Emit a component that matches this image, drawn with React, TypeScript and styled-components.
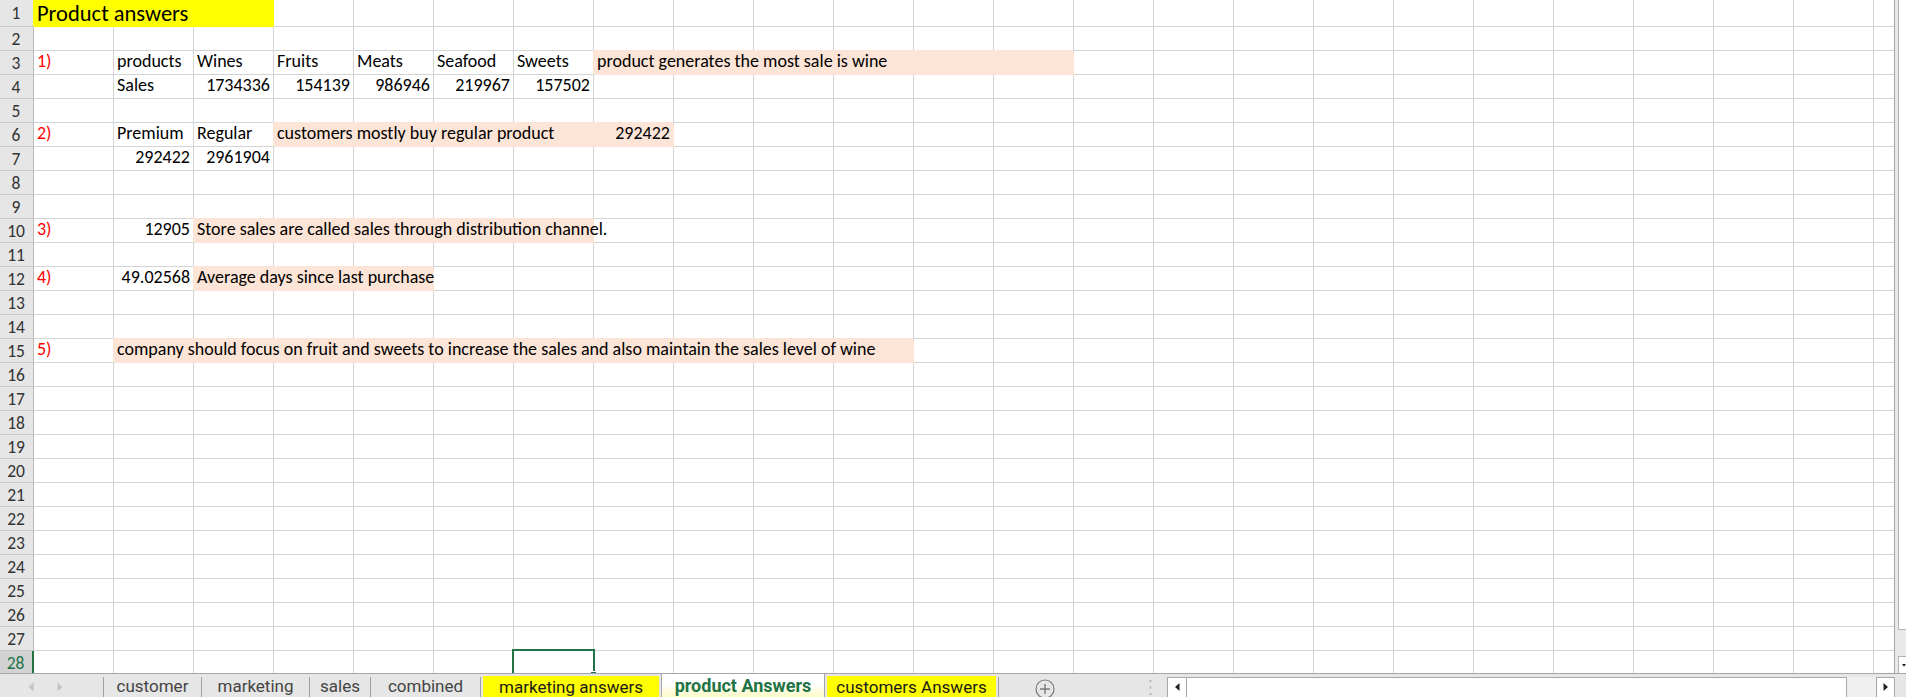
import styled, { createGlobalStyle } from "styled-components";

const GRID = "#d4d4d4";
const EDGE = "#a6a6a6";
const PEACH = "#fce4d6";
const YELLOW = "#ffff00";
const GREEN = "#217346";
const COL_W = 80;
const COLS = 24;
const ROWS = 28;
const SELECTED = { row: 28, col: 6 };

type Spec = {
  col: number;
  span?: number;
  text: string;
  right?: boolean;
  fill?: string;
  red?: boolean;
  big?: boolean;
};

const sheet: Record<number, Spec[]> = {
  1: [{ col: 0, span: 3, text: "Product answers", fill: YELLOW, big: true }],
  3: [
    { col: 0, text: "1)", red: true },
    { col: 1, text: "products" },
    { col: 2, text: "Wines" },
    { col: 3, text: "Fruits" },
    { col: 4, text: "Meats" },
    { col: 5, text: "Seafood" },
    { col: 6, text: "Sweets" },
    { col: 7, span: 6, text: "product generates the most sale is wine", fill: PEACH },
  ],
  4: [
    { col: 1, text: "Sales" },
    { col: 2, text: "1734336", right: true },
    { col: 3, text: "154139", right: true },
    { col: 4, text: "986946", right: true },
    { col: 5, text: "219967", right: true },
    { col: 6, text: "157502", right: true },
  ],
  6: [
    { col: 0, text: "2)", red: true },
    { col: 1, text: "Premium" },
    { col: 2, text: "Regular" },
    { col: 3, span: 4, text: "customers mostly buy regular product", fill: PEACH },
    { col: 7, text: "292422", right: true, fill: PEACH },
  ],
  7: [
    { col: 1, text: "292422", right: true },
    { col: 2, text: "2961904", right: true },
  ],
  10: [
    { col: 0, text: "3)", red: true },
    { col: 1, text: "12905", right: true },
    { col: 2, span: 5, text: "Store sales are called sales through distribution channel.", fill: PEACH },
  ],
  12: [
    { col: 0, text: "4)", red: true },
    { col: 1, text: "49.02568", right: true },
    { col: 2, span: 3, text: "Average days since last purchase", fill: PEACH },
  ],
  15: [
    { col: 0, text: "5)", red: true },
    {
      col: 1,
      span: 10,
      text: "company should focus on fruit and sweets to increase the sales and also maintain the sales level of wine",
      fill: PEACH,
    },
  ],
};

const tabs = [
  { name: "customer", width: 97 },
  { name: "marketing", width: 107 },
  { name: "sales", width: 60 },
  { name: "combined", width: 109 },
];

const App = () => {
  const renderCells = (row: number) => {
    const specs = sheet[row] ?? [];
    const out = [];
    let col = 0;
    while (col < COLS) {
      const spec = specs.find((s) => s.col === col);
      if (spec) {
        const span = spec.span ?? 1;
        out.push(
          <Cell
            key={col}
            $span={span}
            $fill={spec.fill}
            $right={spec.right}
            $red={spec.red}
            $big={spec.big}
          >
            {spec.text}
          </Cell>
        );
        col += span;
      } else {
        const selected = row === SELECTED.row && col === SELECTED.col;
        out.push(
          <Cell key={col} $span={1} $selected={selected}>
            {selected && (
              <SelectBox>
                <FillHandle />
              </SelectBox>
            )}
          </Cell>
        );
        col += 1;
      }
    }
    return out;
  };

  return (
    <Window>
      <GlobalStyle />
      <Main>
        <Grid>
          {Array.from({ length: ROWS }, (_, i) => i + 1).map((r) => (
            <Row key={r} $tall={r === 1}>
              <RowHead $active={r === SELECTED.row}>{r}</RowHead>
              {renderCells(r)}
            </Row>
          ))}
        </Grid>
        <VScroll>
          <VThumb />
          <VTrack />
          <VButton>
            <svg width="7" height="5" viewBox="0 0 7 5">
              <path d="M0 0h7L3.5 4.5z" fill="#222" />
            </svg>
          </VButton>
        </VScroll>
      </Main>

      <TabBar>
        <NavArrows>
          <svg width="6" height="10" viewBox="0 0 6 10">
            <path d="M5.5 0.5v9L0.5 5z" fill="#c4c4c4" />
          </svg>
          <svg width="6" height="10" viewBox="0 0 6 10">
            <path d="M0.5 0.5v9L5.5 5z" fill="#c4c4c4" />
          </svg>
        </NavArrows>
        <Sep />
        {tabs.map((t) => (
          <Frag key={t.name}>
            <SheetTab $width={t.width}>{t.name}</SheetTab>
            <Sep />
          </Frag>
        ))}
        <SheetTab $width={176} $fill={YELLOW}>
          marketing answers
        </SheetTab>
        <ActiveTab>product Answers</ActiveTab>
        <SheetTab $width={169} $fill={YELLOW}>
          customers Answers
        </SheetTab>
        <Sep />
        <AddSheet>
          <svg width="20" height="20" viewBox="0 0 20 20">
            <circle cx="10" cy="10" r="9" fill="none" stroke="#7a7a7a" strokeWidth="1.2" />
            <path d="M10 5v10M5 10h10" stroke="#7a7a7a" strokeWidth="1.4" />
          </svg>
        </AddSheet>
        <Splitter>
          <svg width="3" height="15" viewBox="0 0 3 15">
            <rect x="0.5" y="0" width="2" height="2" fill="#b8b8b8" />
            <rect x="0.5" y="6.5" width="2" height="2" fill="#b8b8b8" />
            <rect x="0.5" y="13" width="2" height="2" fill="#b8b8b8" />
          </svg>
        </Splitter>
        <HScroll>
          <HButton $left>
            <svg width="5" height="8" viewBox="0 0 5 8">
              <path d="M4.5 0v8L0 4z" fill="#222" />
            </svg>
          </HButton>
          <HThumb />
          <HTrack />
          <HButton>
            <svg width="5" height="8" viewBox="0 0 5 8">
              <path d="M0.5 0v8L5 4z" fill="#222" />
            </svg>
          </HButton>
        </HScroll>
        <Corner />
      </TabBar>
    </Window>
  );
};

export default App;

const Frag = ({ children }: { children: React.ReactNode }) => <>{children}</>;

const GlobalStyle = createGlobalStyle`
  html, body {
    margin: 0;
    padding: 0;
    background: #ffffff;
    overflow: hidden;
  }
`;

const Window = styled.div`
  width: 1906px;
  height: 697px;
  display: flex;
  flex-direction: column;
  overflow: hidden;
  font-family: Carlito, Calibri, Lato, "Liberation Sans", sans-serif;
`;

const Main = styled.div`
  flex: none;
  height: 673px;
  display: flex;
  overflow: hidden;
`;

const Grid = styled.div`
  flex: 1;
  min-width: 0;
  overflow: hidden;
`;

const Row = styled.div<{ $tall?: boolean }>`
  display: flex;
  height: ${({ $tall }) => ($tall ? 27 : 24)}px;
`;

const RowHead = styled.div<{ $active?: boolean }>`
  flex: none;
  box-sizing: border-box;
  width: 34px;
  height: 100%;
  display: flex;
  align-items: center;
  justify-content: center;
  padding-right: 1px;
  background: ${({ $active }) => ($active ? "#d2d2d2" : "#e6e6e6")};
  border-right: ${({ $active }) => ($active ? `2px solid ${GREEN}` : "1px solid #bcbcbc")};
  border-bottom: 1px solid #c9c9c9;
  color: ${({ $active }) => ($active ? GREEN : "#333333")};
  font-size: 17.5px;
`;

const Cell = styled.div<{
  $span: number;
  $fill?: string;
  $right?: boolean;
  $red?: boolean;
  $big?: boolean;
  $selected?: boolean;
}>`
  flex: none;
  position: relative;
  z-index: ${({ $fill, $selected }) => ($selected ? 2 : $fill ? 1 : "auto")};
  box-sizing: border-box;
  width: ${({ $span }) => $span * COL_W}px;
  height: 100%;
  padding: 0 3px;
  border-right: 1px solid ${({ $fill }) => $fill ?? GRID};
  border-bottom: 1px solid ${({ $fill }) => $fill ?? GRID};
  background: ${({ $fill }) => $fill ?? "transparent"};
  box-shadow: ${({ $fill }) => ($fill ? `-1px -1px 0 ${$fill}` : "none")};
  white-space: nowrap;
  text-align: ${({ $right }) => ($right ? "right" : "left")};
  color: ${({ $red }) => ($red ? "#ff0000" : "#000000")};
  font-size: ${({ $big }) => ($big ? 22.5 : 18)}px;
  line-height: ${({ $big }) => ($big ? 27 : 21)}px;
`;

const SelectBox = styled.div`
  position: absolute;
  left: -2px;
  top: -2px;
  right: -2px;
  bottom: -2px;
  border: 2px solid ${GREEN};
`;

const FillHandle = styled.div`
  position: absolute;
  right: -4px;
  bottom: -4px;
  width: 5px;
  height: 5px;
  background: ${GREEN};
  border: 1px solid #ffffff;
`;

const VScroll = styled.div`
  flex: none;
  box-sizing: border-box;
  width: 12px;
  display: flex;
  flex-direction: column;
  padding-left: 3px;
  background: #e9e9e9;
  border-left: 1px solid ${EDGE};
`;

const VThumb = styled.div`
  flex: none;
  box-sizing: border-box;
  height: 631px;
  margin-top: -1px;
  background: #ffffff;
  border: 1px solid #b3b3b3;
  border-right: none;
`;

const VTrack = styled.div`
  flex: 1;
`;

const VButton = styled.div`
  flex: none;
  box-sizing: border-box;
  height: 17px;
  padding: 6px 0 0 3px;
  background: #ffffff;
  border: 1px solid #b3b3b3;
  border-right: none;
  border-bottom: none;
  display: flex;
  align-items: flex-start;
`;

const TabBar = styled.div`
  flex: none;
  box-sizing: border-box;
  height: 24px;
  display: flex;
  background: #e6e6e6;
  border-top: 1px solid ${EDGE};
  font-family: Roboto, "Segoe UI", "Noto Sans", sans-serif;
  font-size: 17px;
  overflow: hidden;
`;

const NavArrows = styled.div`
  flex: none;
  width: 103px;
  display: flex;
  align-items: center;
  padding: 3px 0 0 28px;
  box-sizing: border-box;
  gap: 23px;
`;

const Sep = styled.div`
  flex: none;
  width: 1px;
  margin-top: 3px;
  background: #a0a0a0;
`;

const SheetTab = styled.div<{ $width: number; $fill?: string }>`
  flex: none;
  width: ${({ $width }) => $width}px;
  margin: ${({ $fill }) => ($fill ? "2px 2px 0" : "0")};
  display: flex;
  align-items: center;
  justify-content: center;
  background: ${({ $fill }) => $fill ?? "transparent"};
  color: ${({ $fill }) => ($fill ? "#1a1a1a" : "#444444")};
  white-space: nowrap;
`;

const ActiveTab = styled.div`
  flex: none;
  box-sizing: border-box;
  width: 164px;
  margin-top: -1px;
  display: flex;
  align-items: center;
  justify-content: center;
  padding-top: 1px;
  background: linear-gradient(to bottom, #ffffff 0%, #ffffff 45%, #fbfbc4 100%);
  border-left: 1px solid ${EDGE};
  border-right: 1px solid ${EDGE};
  color: ${GREEN};
  font-size: 18px;
  font-weight: 700;
  white-space: nowrap;
`;

const AddSheet = styled.div`
  flex: none;
  width: 91px;
  display: flex;
  align-items: center;
  justify-content: center;
  padding-top: 6px;
  box-sizing: border-box;
`;

const Splitter = styled.div`
  flex: none;
  width: 77px;
  box-sizing: border-box;
  display: flex;
  align-items: center;
  justify-content: flex-end;
  padding: 4px 15px 0 0;
`;

const HScroll = styled.div`
  flex: none;
  width: 728px;
  height: 21px;
  margin-top: 3px;
  display: flex;
`;

const HButton = styled.div<{ $left?: boolean }>`
  flex: none;
  box-sizing: border-box;
  width: 19px;
  display: flex;
  align-items: center;
  justify-content: center;
  padding-bottom: 2px;
  background: #ffffff;
  border: 1px solid #a8a8a8;
  border-right: ${({ $left }) => ($left ? "none" : "1px solid #a8a8a8")};
`;

const HThumb = styled.div`
  flex: none;
  box-sizing: border-box;
  width: 661px;
  background: #ffffff;
  border: 1px solid #a8a8a8;
`;

const HTrack = styled.div`
  flex: none;
  width: 29px;
  background: #f0f0f0;
`;

const Corner = styled.div`
  flex: 1;
`;
